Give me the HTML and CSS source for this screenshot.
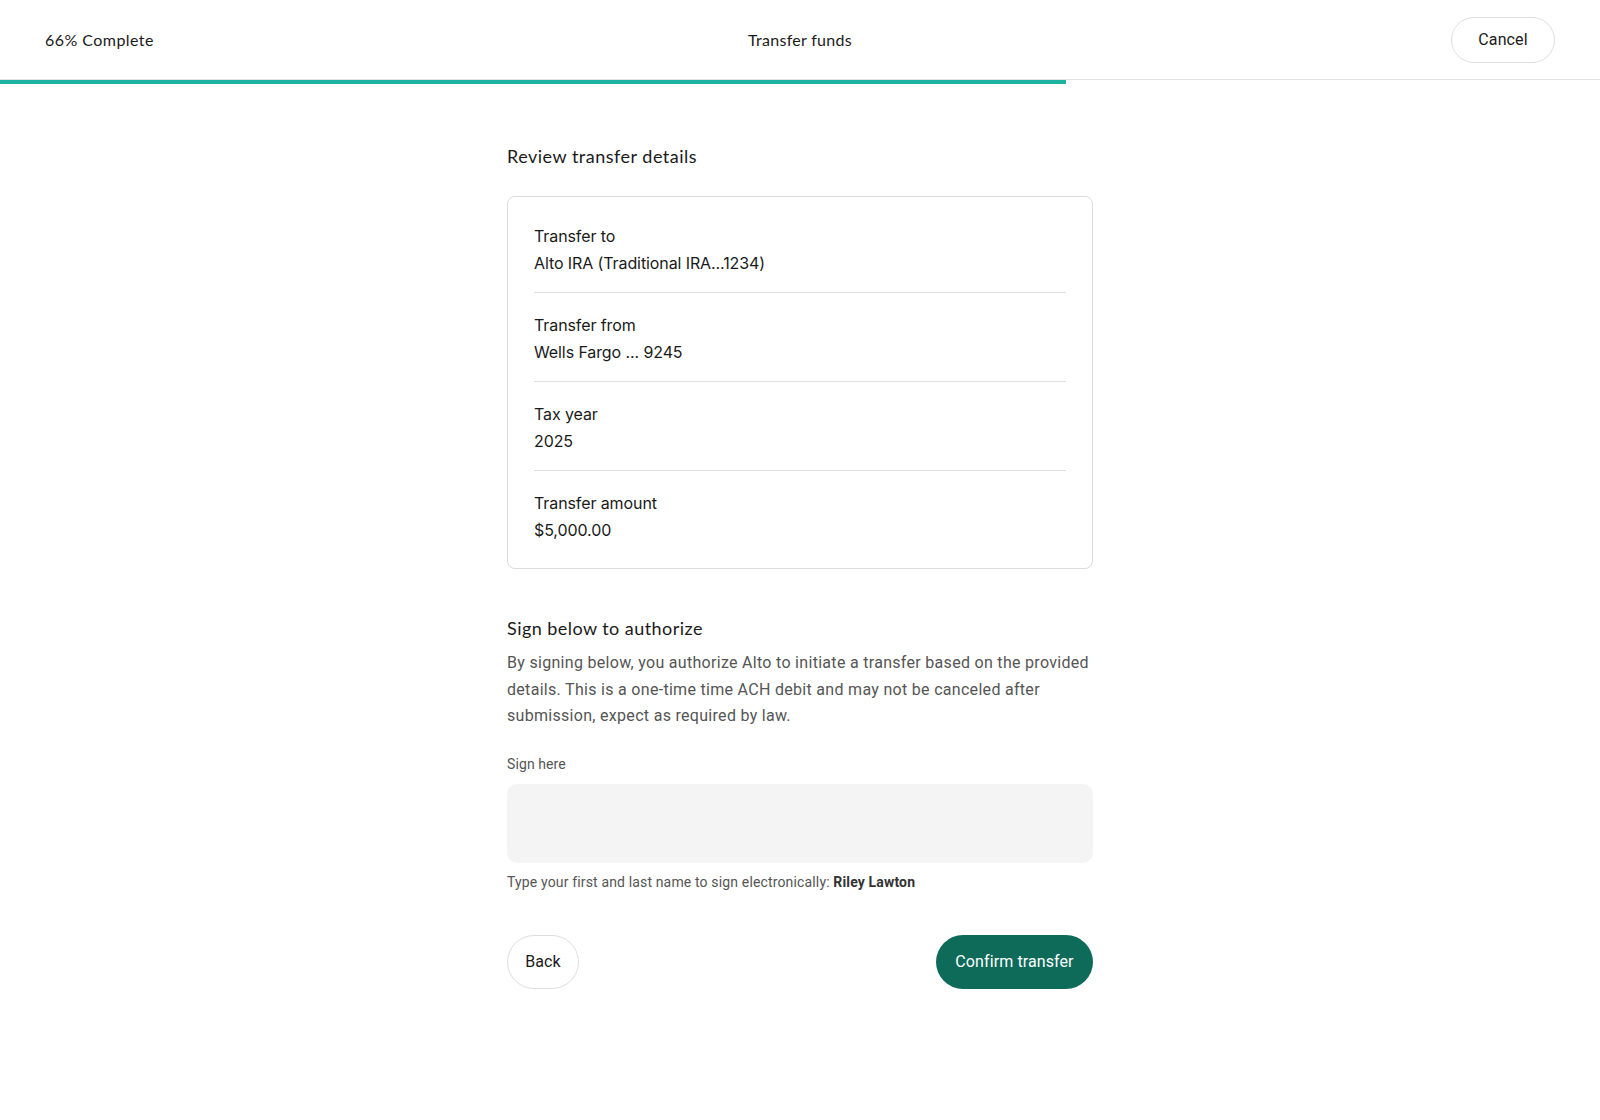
FILE: index.html
```html
<!DOCTYPE html>
<html lang="en">
<head>
<meta charset="utf-8">
<title>Transfer funds</title>
<link rel="stylesheet" href="styles.css">
</head>
<body>
<header class="topbar">
  <div class="progress-label">66% Complete</div>
  <div class="topbar-title">Transfer funds</div>
  <div class="topbar-actions"><button class="btn btn-outline btn-cancel">Cancel</button></div>
</header>
<div class="progress"><div class="progress-fill" style="width:66.65%"></div></div>

<main class="content">
  <h1 class="section-title">Review transfer details</h1>
  <div class="card">
    <div class="row">
      <div class="row-label">Transfer to</div>
      <div class="row-value">Alto IRA (Traditional IRA...1234)</div>
    </div>
    <div class="row">
      <div class="row-label">Transfer from</div>
      <div class="row-value">Wells Fargo ... 9245</div>
    </div>
    <div class="row">
      <div class="row-label">Tax year</div>
      <div class="row-value">2025</div>
    </div>
    <div class="row">
      <div class="row-label">Transfer amount</div>
      <div class="row-value">$5,000.00</div>
    </div>
  </div>

  <h2 class="section-title sign-title">Sign below to authorize</h2>
  <p class="disclaimer">By signing below, you authorize Alto to initiate a transfer based on the provided details. This is a one-time time ACH debit and may not be canceled after submission, expect as required by law.</p>

  <label class="field-label" for="sig">Sign here</label>
  <input id="sig" class="sign-input" type="text">
  <p class="helper">Type your first and last name to sign electronically: <strong>Riley Lawton</strong></p>

  <div class="actions">
    <button class="btn btn-outline btn-back">Back</button>
    <button class="btn btn-primary">Confirm transfer</button>
  </div>
</main>
</body>
</html>
```

FILE: styles.css
```css
* { box-sizing: border-box; }

body {
  margin: 0;
  font-family: Roboto, "Liberation Sans", sans-serif;
  color: #1a1a1a;
  background: #fff;
}

.topbar {
  height: 80px;
  display: grid;
  grid-template-columns: 1fr auto 1fr;
  align-items: center;
  padding: 0 45px;
  border-bottom: 1px solid #e3e3e3;
}

.progress-label,
.topbar-title {
  font-family: Lato, "Noto Sans", sans-serif;
  font-size: 16px;
  color: #1a1a1a;
}

.progress-label { letter-spacing: 0.45px; }
.topbar-title { text-align: center; letter-spacing: 0.3px; }

.topbar-actions {
  display: flex;
  justify-content: flex-end;
}

.progress {
  height: 4px;
}

.progress-fill {
  height: 100%;
  background: #1db3a0;
}

.btn {
  font-family: Roboto, "Liberation Sans", sans-serif;
  font-size: 16px;
  border-radius: 999px;
  cursor: pointer;
  padding: 0;
  letter-spacing: 0.1px;
}

.btn-outline {
  background: #fff;
  border: 1px solid #dedede;
  color: #1a1a1a;
}

.btn-cancel {
  width: 104px;
  height: 46px;
}

.content {
  width: 586px;
  margin: 0 auto;
  padding-top: 60px;
  padding-bottom: 80px;
}

.section-title {
  margin: 0;
  font-family: Lato, "Noto Sans", sans-serif;
  font-size: 18px;
  line-height: 24px;
  font-weight: 400;
  color: #1a1a1a;
  letter-spacing: 0.5px;
}

.card {
  margin-top: 28px;
  border: 1px solid #dcdcdc;
  border-radius: 8px;
  padding: 7px 26px 9px;
}

.row {
  padding: 20px 0 17px;
  border-bottom: 1px solid #dedede;
}

.row:last-child { border-bottom: none; }

.row-label,
.row-value {
  font-family: Inter, Roboto, sans-serif;
  font-size: 16px;
  line-height: 24px;
  color: #1a1a1a;
  letter-spacing: -0.1px;
}

.row-value { margin-top: 3px; }

.sign-title { margin-top: 47px; letter-spacing: 0.45px; }

.disclaimer {
  margin: 10px 0 0;
  font-size: 16px;
  line-height: 26.5px;
  color: #555;
  letter-spacing: 0.3px;
}

.field-label {
  display: block;
  margin-top: 24px;
  font-size: 14px;
  line-height: 20px;
  color: #555;
  letter-spacing: 0.1px;
}

.sign-input {
  display: block;
  width: 100%;
  height: 79px;
  margin-top: 10px;
  border: none;
  border-radius: 10px;
  background: #f4f4f4;
  font-size: 18px;
  padding: 0 20px;
  outline: none;
}

.helper {
  margin: 9px 0 0;
  font-size: 14px;
  line-height: 20px;
  color: #555;
  letter-spacing: 0.15px;
}

.helper strong {
  color: #333;
  font-weight: 700;
}

.actions {
  margin-top: 43px;
  display: flex;
  justify-content: space-between;
  align-items: center;
}

.btn-back {
  width: 72px;
  height: 54px;
}

.btn-primary {
  width: 157px;
  height: 54px;
  border: none;
  background: #0e6b5a;
  color: #fff;
}
```
